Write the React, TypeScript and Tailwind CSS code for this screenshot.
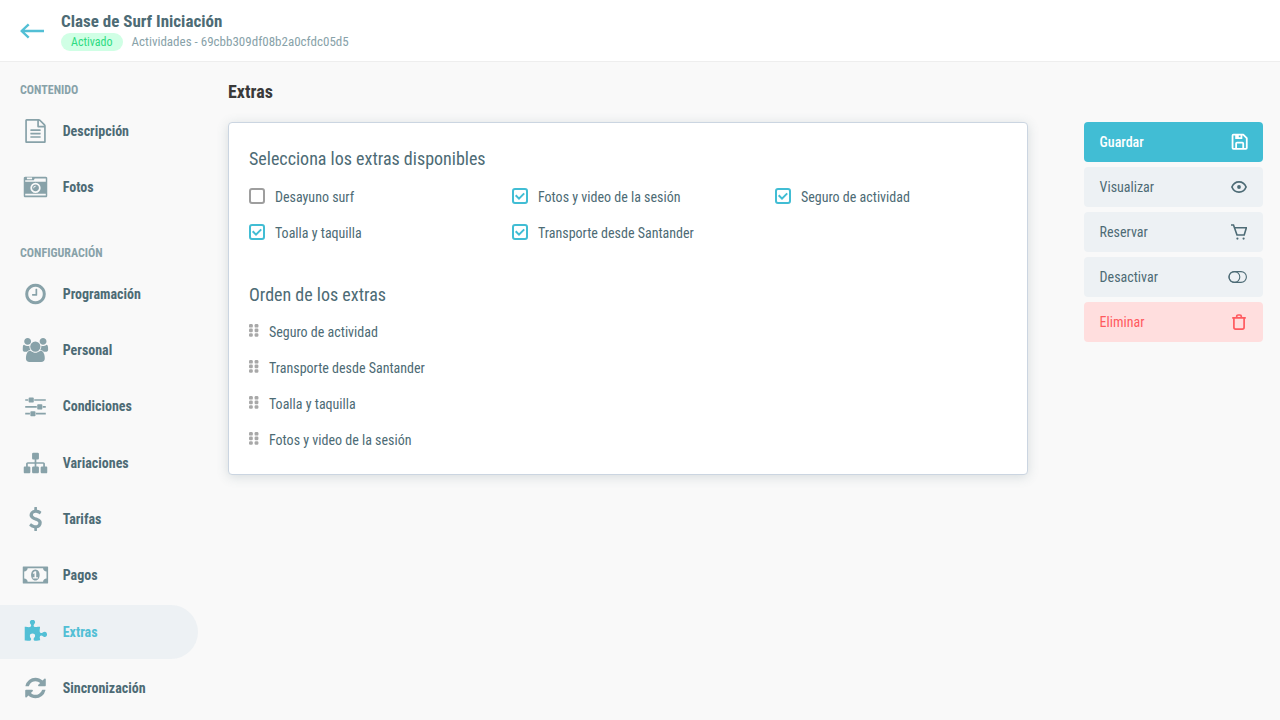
import React from 'react';
import { BiSave } from 'react-icons/bi';

type IconProps = { width?: number; d: string };

const Glyph: React.FC<IconProps> = ({ width = 1792, d }) => (
  <svg className="h-6 w-auto translate-x-[0.5px]" viewBox={`0 0 ${width} 1792`} fill="currentColor">
    <path d={d} />
  </svg>
);

const contentItems = [
  {
    label: 'Descripción',
    width: 1792,
    d: 'M1596 380q28 28 48 76t20 88v1152q0 40-28 68t-68 28h-1344q-40 0-68-28t-28-68v-1600q0-40 28-68t68-28h896q40 0 88 20t76 48zm-444-244v376h376q-10-29-22-41l-313-313q-12-12-41-22zm384 1528v-1024h-416q-40 0-68-28t-28-68v-416h-768v1536h1280zm-1024-864q0-14 9-23t23-9h704q14 0 23 9t9 23v64q0 14-9 23t-23 9h-704q-14 0-23-9t-9-23v-64zm736 224q14 0 23 9t9 23v64q0 14-9 23t-23 9h-704q-14 0-23-9t-9-23v-64q0-14 9-23t23-9h704zm0 256q14 0 23 9t9 23v64q0 14-9 23t-23 9h-704q-14 0-23-9t-9-23v-64q0-14 9-23t23-9h704z',
  },
  {
    label: 'Fotos',
    width: 1792,
    d: 'M928 832q0-14-9-23t-23-9q-66 0-113 47t-47 113q0 14 9 23t23 9 23-9 9-23q0-40 28-68t68-28q14 0 23-9t9-23zm224 130q0 106-75 181t-181 75-181-75-75-181 75-181 181-75 181 75 75 181zm-1024 574h1536v-128h-1536v128zm1152-574q0-159-112.5-271.5t-271.5-112.5-271.5 112.5-112.5 271.5 112.5 271.5 271.5 112.5 271.5-112.5 112.5-271.5zm-1024-642h384v-128h-384v128zm-128 192h1536v-256h-828l-64 128h-644v128zm1664-256v1280q0 53-37.5 90.5t-90.5 37.5h-1536q-53 0-90.5-37.5t-37.5-90.5v-1280q0-53 37.5-90.5t90.5-37.5h1536q53 0 90.5 37.5t37.5 90.5z',
  },
];

const configItems = [
  {
    label: 'Programación',
    width: 1792,
    d: 'M1024 544v448q0 14-9 23t-23 9h-320q-14 0-23-9t-9-23v-64q0-14 9-23t23-9h224v-352q0-14 9-23t23-9h64q14 0 23 9t9 23zm416 352q0-148-73-273t-198-198-273-73-273 73-198 198-73 273 73 273 198 198 273 73 273-73 198-198 73-273zm224 0q0 209-103 385.5t-279.5 279.5-385.5 103-385.5-103-279.5-279.5-103-385.5 103-385.5 279.5-279.5 385.5-103 385.5 103 279.5 279.5 103 385.5z',
  },
  {
    label: 'Personal',
    width: 1920,
    d: 'M593 896q-162 5-265 128h-134q-82 0-138-40.5t-56-118.5q0-353 124-353 6 0 43.5 21t97.5 42.5 119 21.5q67 0 133-23-5 37-5 66 0 139 81 256zm1071 637q0 120-73 189.5t-194 69.5h-874q-121 0-194-69.5t-73-189.5q0-53 3.5-103.5t14-109 26.5-108.5 43-97.5 62-81 85.5-53.5 111.5-20q10 0 43 21.5t73 48 107 48 135 21.5 135-21.5 107-48 73-48 43-21.5q61 0 111.5 20t85.5 53.5 62 81 43 97.5 26.5 108.5 14 109 3.5 103.5zm-1024-1277q0 106-75 181t-181 75-181-75-75-181 75-181 181-75 181 75 75 181zm704 384q0 159-112.5 271.5t-271.5 112.5-271.5-112.5-112.5-271.5 112.5-271.5 271.5-112.5 271.5 112.5 112.5 271.5zm576 225q0 78-56 118.5t-138 40.5h-134q-103-123-265-128 81-117 81-256 0-29-5-66 66 23 133 23 59 0 119-21.5t97.5-42.5 43.5-21q124 0 124 353zm-128-609q0 106-75 181t-181 75-181-75-75-181 75-181 181-75 181 75 75 181z',
  },
  {
    label: 'Condiciones',
    width: 1792,
    d: 'M480 1408v128h-352v-128h352zm352-128q26 0 45 19t19 45v256q0 26-19 45t-45 19h-256q-26 0-45-19t-19-45v-256q0-26 19-45t45-19h256zm160-384v128h-864v-128h864zm-640-512v128h-224v-128h224zm1312 1024v128h-736v-128h736zm-960-1152q26 0 45 19t19 45v256q0 26-19 45t-45 19h-256q-26 0-45-19t-19-45v-256q0-26 19-45t45-19h256zm640 512q26 0 45 19t19 45v256q0 26-19 45t-45 19h-256q-26 0-45-19t-19-45v-256q0-26 19-45t45-19h256zm320 128v128h-224v-128h224zm0-512v128h-864v-128h864z',
  },
  {
    label: 'Variaciones',
    width: 1792,
    d: 'M1792 1248v320q0 40-28 68t-68 28h-320q-40 0-68-28t-28-68v-320q0-40 28-68t68-28h96v-192h-512v192h96q40 0 68 28t28 68v320q0 40-28 68t-68 28h-320q-40 0-68-28t-28-68v-320q0-40 28-68t68-28h96v-192h-512v192h96q40 0 68 28t28 68v320q0 40-28 68t-68 28h-320q-40 0-68-28t-28-68v-320q0-40 28-68t68-28h96v-192q0-52 38-90t90-38h512v-192h-96q-40 0-68-28t-28-68v-320q0-40 28-68t68-28h320q40 0 68 28t28 68v320q0 40-28 68t-68 28h-96v192h512q52 0 90 38t38 90v192h96q40 0 68 28t28 68z',
  },
  {
    label: 'Tarifas',
    width: 1792,
    d: 'M1362 1185q0 153-99.5 263.5t-258.5 136.5v175q0 14-9 23t-23 9h-135q-13 0-22.5-9.5t-9.5-22.5v-175q-66-9-127.5-31t-101.5-44.5-74-48-46.5-37.5-17.5-18q-17-21-2-41l103-135q7-10 23-12 15-2 24 9l2 2q113 99 243 125 37 8 74 8 81 0 142.5-43t61.5-122q0-28-15-53t-33.5-42-58.5-37.5-66-32-80-32.5q-39-16-61.5-25t-61.5-26.5-62.5-31-56.5-35.5-53.5-42.5-43.5-49-35.5-58-21-66.5-8.5-78q0-138 98-242t255-134v-180q0-13 9.5-22.5t22.5-9.5h135q14 0 23 9t9 23v176q57 6 110.5 23t87 33.5 63.5 37.5 39 29 15 14q17 18 5 38l-81 146q-8 15-23 16-14 3-27-7-3-3-14.5-12t-39-26.5-58.5-32-74.5-26-85.5-11.5q-95 0-155 43t-60 111q0 26 8.5 48t29.5 41.5 39.5 33 56 31 60.5 27 70 27.5q53 20 81 31.5t76 35 75.5 42.5 62 50 53 63.5 31.5 76.5 13 94z',
  },
  {
    label: 'Pagos',
    width: 1920,
    d: 'M768 1152h384v-96h-128v-448h-114l-148 137 77 80q42-37 55-57h2v288h-128v96zm512-256q0 70-21 142t-59.5 134-101.5 101-138 39-138-39-101.5-101-59.5-134-21-142 21-142 59.5-134 101.5-101 138-39 138 39 101.5 101 59.5 134 21 142zm512 256v-512q-106 0-181-75t-75-181h-1152q0 106-75 181t-181 75v512q106 0 181 75t75 181h1152q0-106 75-181t181-75zm128-832v1152q0 26-19 45t-45 19h-1792q-26 0-45-19t-19-45v-1152q0-26 19-45t45-19h1792q26 0 45 19t19 45z',
  },
  {
    label: 'Extras',
    width: 1792,
    active: true,
    d: 'M1755 1083q0 81-44.5 135t-123.5 54q-41 0-77.5-17.5t-59-38-56.5-38-71-17.5q-110 0-110 124 0 39 16 115t15 115v5q-22 0-33 1-34 3-97.5 11.5t-115.5 13.5-98 5q-61 0-103-26.5t-42-83.5q0-37 17.5-71t38-56.5 38-59 17.5-77.5q0-79-54-123.5t-135-44.5q-84 0-143 45.5t-59 127.5q0 43 15 83t33.5 64.5 33.5 53 15 50.5q0 45-46 89-37 35-117 35-95 0-245-24-9-2-27.5-4t-27.5-4l-13-2q-1 0-3-1-2 0-2-1v-1024q2 1 17.5 3.5t34 5 21.5 3.5q150 24 245 24 80 0 117-35 46-44 46-89 0-22-15-50.5t-33.5-53-33.5-64.5-15-83q0-82 59-127.5t144-45.5q80 0 134 44.5t54 123.5q0 41-17.5 77.5t-38 59-38 56.5-17.5 71q0 57 42 83.5t103 26.5q64 0 180-15t163-17v2q-1 2-3.5 17.5t-5 34-3.5 21.5q-24 150-24 245 0 80 35 117 44 46 89 46 22 0 50.5-15t53-33.5 64.5-33.5 83-15q82 0 127.5 59t45.5 143z',
  },
  {
    label: 'Sincronización',
    width: 1792,
    d: 'M1639 1056q0 5-1 7-64 268-268 434.5t-478 166.5q-146 0-282.5-55t-243.5-157l-129 129q-19 19-45 19t-45-19-19-45v-448q0-26 19-45t45-19h448q26 0 45 19t19 45-19 45l-137 137q71 66 161 102t187 36q134 0 250-65t186-179q11-17 53-117 8-23 30-23h192q13 0 22.5 9.5t9.5 22.5zm25-800v448q0 26-19 45t-45 19h-448q-26 0-45-19t-19-45 19-45l138-138q-148-137-349-137-134 0-250 65t-186 179q-11 17-53 117-8 23-30 23h-199q-13 0-22.5-9.5t-9.5-22.5v-7q65-268 270-434.5t480-166.5q146 0 284 55.5t245 156.5l130-129q19-19 45-19t45 19 19 45z',
  },
];

type Item = { label: string; width: number; d: string; active?: boolean };

const NavItem: React.FC<{ item: Item }> = ({ item }) => (
  <a
    className={`mb-[2.3px] flex h-[54px] items-center rounded-r-full ${
      item.active ? 'bg-[#edf1f4] text-[#52bfd5]' : 'text-[#4d6b75]'
    }`}
  >
    <span className={`ml-[19px] flex w-8 justify-center ${item.active ? '' : 'text-[#88a2a9]'}`}>
      <Glyph width={item.width} d={item.d} />
    </span>
    <span className="ml-[11.7px] text-sm font-bold">{item.label}</span>
  </a>
);

const extras = [
  { label: 'Desayuno surf', checked: false },
  { label: 'Fotos y video de la sesión', checked: true },
  { label: 'Seguro de actividad', checked: true },
  { label: 'Toalla y taquilla', checked: true },
  { label: 'Transporte desde Santander', checked: true },
];

const order = [
  'Seguro de actividad',
  'Transporte desde Santander',
  'Toalla y taquilla',
  'Fotos y video de la sesión',
];

const EyeIcon = () => (
  <svg width="16" height="16" viewBox="0 0 16 16" fill="none" stroke="currentColor" strokeWidth="1.7">
    <path d="M.9 8C2.3 4.6 4.9 2.9 8 2.9S13.7 4.6 15.1 8C13.7 11.4 11.1 13.1 8 13.1S2.3 11.4.9 8z" />
    <circle cx="8" cy="8" r="1.9" fill="currentColor" stroke="none" />
  </svg>
);

const CartIcon = () => (
  <svg width="16" height="16" viewBox="0 0 16 16" fill="none" stroke="currentColor" strokeWidth="1.6">
    <path d="M0 1h2.5L6 11h7.2l2.2-7.2H3.6" />
    <circle cx="6.4" cy="14.6" r="1.1" fill="currentColor" stroke="none" />
    <circle cx="12.6" cy="14.6" r="1.1" fill="currentColor" stroke="none" />
  </svg>
);

const TrashIcon = () => (
  <svg width="16" height="16" viewBox="0 0 16 16" fill="none" stroke="currentColor" strokeWidth="1.7">
    <path d="M1.2 3.8h13.6M5.7 3.5V2.4A1.4 1.4 0 0 1 7.1 1h1.8a1.4 1.4 0 0 1 1.4 1.4v1.1M2.9 4v9.3a1.8 1.8 0 0 0 1.8 1.8h6.6a1.8 1.8 0 0 0 1.8-1.8V4" />
  </svg>
);

const ToggleIcon = () => (
  <svg width="19" height="12" viewBox="0 0 19 12" fill="none" stroke="currentColor" strokeWidth="1.1">
    <rect x="1" y=".6" width="17.4" height="10.8" rx="5.4" />
    <rect x="1" y=".6" width="10.8" height="10.8" rx="5.4" />
  </svg>
);

const actions = [
  { label: 'Guardar', icon: <BiSave className="-mr-[3px]" size={21.33} />, style: 'bg-[#41bdd4] text-white font-medium' },
  { label: 'Visualizar', icon: <EyeIcon />, style: 'bg-[#edf1f4] text-[#4d6b75]' },
  { label: 'Reservar', icon: <CartIcon />, style: 'bg-[#edf1f4] text-[#4d6b75]' },
  { label: 'Desactivar', icon: <ToggleIcon />, style: 'bg-[#edf1f4] text-[#4d6b75]' },
  { label: 'Eliminar', icon: <TrashIcon />, style: 'bg-[#ffdede] text-[#ff5a5f]' },
];

const Checkbox: React.FC<{ checked: boolean }> = ({ checked }) => (
  <span
    className={`flex h-4 w-4 items-center justify-center rounded-[3px] border-2 ${
      checked ? 'border-[#41bdd4]' : 'border-[#9e9e9e]'
    }`}
  >
    {checked && (
      <svg width="12" height="12" viewBox="0 0 12 12" fill="none" stroke="#41bdd4" strokeWidth="2">
        <path d="M1.7 5.3 5 8.6l5.2-5.2" />
      </svg>
    )}
  </span>
);

const App: React.FC = () => {
  return (
    <div className="h-screen overflow-hidden bg-[#f9f9f9] font-['Roboto_Condensed','Roboto',sans-serif] text-[#4d6b75] antialiased [font-stretch:75%]">
      <header className="flex h-[62px] items-center border-b border-[#eeeeee] bg-white pl-5">
        <svg
          width="25"
          height="16"
          viewBox="0 0 25 16"
          fill="none"
          stroke="#52bfd5"
          strokeWidth="2.4"
          strokeLinejoin="round"
        >
          <path d="M24 8H2M8.7 1.3 1.6 8l7.1 6.7" />
        </svg>
        <div className="-mt-px ml-4">
          <h1 className="text-[17px] leading-[22px] font-bold">Clase de Surf Iniciación</h1>
          <div className="mt-px flex items-center">
            <span className="flex h-[18px] items-center rounded-full bg-[#d0ffe5] px-[10px] text-xs text-[#2ddb81]">
              Activado
            </span>
            <span className="ml-[9px] text-[13px] leading-[18px] text-[#88a2a9]">
              Actividades - 69cbb309df08b2a0cfdc05d5
            </span>
          </div>
        </div>
      </header>

      <div className="flex items-start">
        <nav className="w-[198px] shrink-0 pt-5">
          <h2 className="mb-1.5 pl-5 text-xs leading-4 font-bold text-[#88a2a9]">CONTENIDO</h2>
          {contentItems.map((item) => (
            <NavItem key={item.label} item={item} />
          ))}
          <h2 className="mt-[31px] mb-[5.55px] pl-5 text-xs leading-4 font-bold text-[#88a2a9]">CONFIGURACIÓN</h2>
          {configItems.map((item) => (
            <NavItem key={item.label} item={item} />
          ))}
        </nav>

        <main className="ml-[30px] w-[800px] shrink-0 pt-[18px]">
          <h2 className="text-lg leading-6 font-bold text-[#3a3a3a]">Extras</h2>
          <section className="mt-[18px] h-[353px] rounded border border-[#cbd5e1] bg-white px-5 pt-[25px] shadow-[0_2px_12px_rgba(74,107,117,0.2)]">
            <h3 className="text-lg leading-[22px]">Selecciona los extras disponibles</h3>
            <div className="mt-2 grid grid-cols-[263px_263px_1fr]">
              {extras.map((extra) => (
                <label key={extra.label} className="flex h-9 items-center">
                  <Checkbox checked={extra.checked} />
                  <span className="mt-0.5 ml-[10px] text-sm">{extra.label}</span>
                </label>
              ))}
            </div>
            <h3 className="mt-[34px] text-lg leading-[22px]">Orden de los extras</h3>
            <ul className="mt-2">
              {order.map((name) => (
                <li key={name} className="flex h-9 items-center">
                  <svg className="-mt-[3px]" width="10" height="13" viewBox="0 0 10 13" fill="#a8a8a8">
                    {[0, 4.6, 9.2].map((y) => (
                      <React.Fragment key={y}>
                        <rect x="0" y={y} width="3.8" height="3.6" rx="1.2" />
                        <rect x="5.6" y={y} width="3.8" height="3.6" rx="1.2" />
                      </React.Fragment>
                    ))}
                  </svg>
                  <span className="ml-[10px] text-sm">{name}</span>
                </li>
              ))}
            </ul>
          </section>
        </main>

        <aside className="mt-[60px] ml-14 flex w-[179px] shrink-0 flex-col gap-[5px]">
          {actions.map((action) => (
            <button
              key={action.label}
              className={`flex h-10 items-center justify-between rounded pr-4 pl-[15.6px] text-sm ${action.style}`}
            >
              {action.label}
              {action.icon}
            </button>
          ))}
        </aside>
      </div>
    </div>
  );
};

export default App;
